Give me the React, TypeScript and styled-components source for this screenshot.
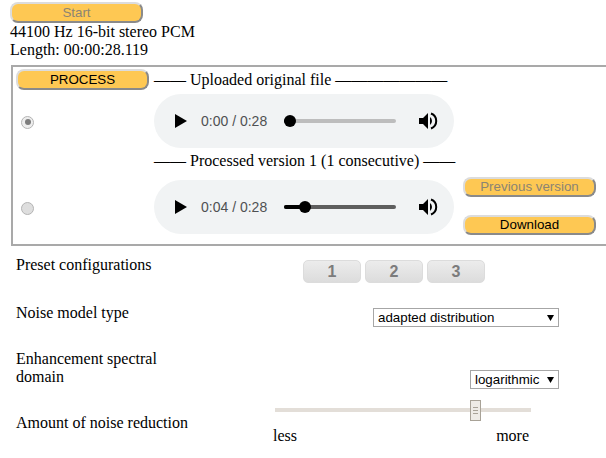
import React from 'react'
import styled, { createGlobalStyle } from 'styled-components'

const GlobalStyle = createGlobalStyle`
  html, body {
    margin: 0;
    padding: 0;
    background: #fff;
    overflow: hidden;
  }
  body {
    font-family: "Liberation Serif", "Times New Roman", serif;
    font-size: 16px;
    color: #000;
  }
`

const Page = styled.div`
  width: 606px;
  height: 458px;
  padding-top: 2px;
  box-sizing: border-box;
  overflow: hidden;
`

const Header = styled.div`
  padding-left: 10px;
`

const Button = styled.button<{ $disabled?: boolean }>`
  display: block;
  width: 133px;
  height: 21px;
  padding: 0;
  box-sizing: border-box;
  border: 2px solid;
  border-color: #dcdcdc #8a8a8a #8a8a8a #dcdcdc;
  border-radius: 8px;
  background: #fec853;
  font-family: "Liberation Sans", Arial, sans-serif;
  font-size: 13.33px;
  line-height: 16px;
  color: ${p => (p.$disabled ? '#8b8474' : '#000')};
`

const Info = styled.div`
  line-height: 18px;
`

const Panel = styled.div`
  display: grid;
  grid-template-columns: 138px 300px 1fr;
  grid-template-rows: 21px 58px 28px 58px;
  margin: 6px 0 0 11px;
  width: 620px;
  height: 181px;
  box-sizing: border-box;
  border: 2px solid #a9a9a9;
  padding: 2px 0 0 3px;
`

const Title = styled.div`
  line-height: 21px;
  white-space: nowrap;
`

const ProcessedTitle = styled(Title)`
  grid-column: 2;
  margin-top: 2px;
  line-height: 22px;
`

const RadioCell = styled.div`
  display: flex;
  align-items: center;
  padding: 6px 0 0 5px;
`

const Radio = styled.span<{ $checked?: boolean }>`
  position: relative;
  display: block;
  width: 13px;
  height: 13px;
  box-sizing: border-box;
  border: 1px solid #b4b4b4;
  border-radius: 50%;
  background: ${p => (p.$checked ? '#eeeeee' : '#dedede')};

  &::after {
    content: '';
    display: ${p => (p.$checked ? 'block' : 'none')};
    position: absolute;
    left: 2.5px;
    top: 2.5px;
    width: 6px;
    height: 6px;
    border-radius: 50%;
    background: #7d7d7d;
  }
`

const Player = styled.div`
  display: flex;
  align-items: center;
  width: 300px;
  height: 54px;
  margin-top: 4px;
  border-radius: 27px;
  background: #f1f3f4;
  font-family: "Liberation Sans", Arial, sans-serif;
  font-size: 14px;
  color: #4f5052;
`

const PlayIcon = styled.svg`
  width: 12px;
  height: 14px;
  margin-left: 21px;
  fill: #000;
`

const Time = styled.span`
  width: 83px;
  margin-left: 14px;
  white-space: nowrap;
`

const Track = styled.div<{ $elapsed: boolean }>`
  position: relative;
  width: 112px;
  height: 4px;
  border-radius: 2px;
  background: ${p => (p.$elapsed ? '#5e5e5e' : '#bdbdbd')};
`

const Fill = styled.div`
  height: 4px;
  border-radius: 2px;
  background: #000;
`

const Knob = styled.span`
  position: absolute;
  top: -4px;
  width: 12px;
  height: 12px;
  margin-left: -6px;
  border-radius: 50%;
  background: #000;
`

const VolumeIcon = styled.svg`
  width: 20px;
  height: 20px;
  margin-left: 22px;
`

const SideButtons = styled.div`
  display: flex;
  flex-direction: column;
  gap: 18px;
  padding-left: 9px;
  margin-top: 1px;
`

const Settings = styled.div`
  padding-left: 16px;
`

const Row = styled.div<{ $height: number }>`
  display: grid;
  grid-template-columns: 259px 331px;
  height: ${p => p.$height}px;
`

const Label = styled.div`
  line-height: 18px;
  white-space: nowrap;
`

const PresetRow = styled(Row)`
  padding-top: 10px;
  box-sizing: border-box;
`

const Presets = styled.div`
  display: flex;
  gap: 4px;
  margin: 4px 0 0 28px;
`

const Preset = styled.button`
  width: 58px;
  height: 23px;
  padding: 0;
  box-sizing: border-box;
  border: 1px solid #dcdcdc;
  border-radius: 5px;
  background: linear-gradient(#ececec, #dcdcdc);
  font-family: "Liberation Sans", Arial, sans-serif;
  font-size: 16px;
  font-weight: 700;
  color: #7c7c7c;
`

const SelectCell = styled.div<{ $top: number }>`
  display: flex;
  justify-content: flex-end;
  align-items: flex-start;
  padding: ${p => p.$top}px 47px 0 0;
`

const SelectBox = styled.div<{ $width: number }>`
  display: flex;
  align-items: center;
  justify-content: space-between;
  width: ${p => p.$width}px;
  height: 19px;
  box-sizing: border-box;
  padding: 0 4px;
  border: 1px solid #a6a6a6;
  background: #fff;
  font-family: "Liberation Sans", Arial, sans-serif;
  font-size: 13.33px;
  white-space: nowrap;
`

const Arrow = styled.svg`
  width: 7px;
  height: 6px;
  fill: #000;
`

const SliderCell = styled.div`
  width: 256px;
  margin-top: -6px;
`

const SliderTrack = styled.div`
  position: relative;
  height: 4px;
  background: #e3ded8;
`

const Thumb = styled.span`
  position: absolute;
  left: 195px;
  top: -8px;
  display: flex;
  flex-direction: column;
  gap: 2px;
  justify-content: center;
  align-items: center;
  width: 11px;
  height: 21px;
  box-sizing: border-box;
  border: 1px solid #a8a297;
  background: #eeebe6;

  i {
    display: block;
    width: 5px;
    height: 1px;
    background: #a8a297;
  }
`

const Scale = styled.div`
  display: flex;
  justify-content: space-between;
  margin: 15px 2px 0 -2px;
  line-height: 18px;
`

const Audio = ({ time, position }: { time: string; position: number }) => (
  <Player>
    <PlayIcon viewBox="0 0 12 14">
      <path d="M0 0 L12 7 L0 14 Z" />
    </PlayIcon>
    <Time>{time} / 0:28</Time>
    <Track $elapsed={position > 6}>
      <Fill style={{ width: position }} />
      <Knob style={{ left: position }} />
    </Track>
    <VolumeIcon viewBox="0 0 20 20">
      <path d="M1 7 H5 L10 2 V18 L5 13 H1 Z" fill="#000" />
      <path d="M12 6 A5 5 0 0 1 12 14 Z" fill="#000" />
      <path d="M13 2.5 A8 8 0 0 1 13 17.5" fill="none" stroke="#000" strokeWidth="2" />
    </VolumeIcon>
  </Player>
)

const Select = ({ width, children }: { width: number; children: string }) => (
  <SelectBox $width={width}>
    {children}
    <Arrow viewBox="0 0 7 6">
      <path d="M0 0 H7 L3.5 6 Z" />
    </Arrow>
  </SelectBox>
)

const App = () => (
  <Page>
    <GlobalStyle />
    <Header>
      <Button $disabled>Start</Button>
      <Info>
        44100 Hz 16-bit stereo PCM
        <br />
        Length: 00:00:28.119
      </Info>
    </Header>

    <Panel>
      <Button>PROCESS</Button>
      <Title>—— Uploaded original file ———————</Title>
      <div />

      <RadioCell>
        <Radio $checked />
      </RadioCell>
      <Audio time="0:00" position={6} />
      <div />

      <ProcessedTitle>—— Processed version 1 (1 consecutive) ——</ProcessedTitle>
      <div />

      <RadioCell>
        <Radio />
      </RadioCell>
      <Audio time="0:04" position={21} />
      <SideButtons>
        <Button $disabled>Previous version</Button>
        <Button>Download</Button>
      </SideButtons>
    </Panel>

    <Settings>
      <PresetRow $height={58}>
        <Label>Preset configurations</Label>
        <Presets>
          <Preset>1</Preset>
          <Preset>2</Preset>
          <Preset>3</Preset>
        </Presets>
      </PresetRow>

      <Row $height={46}>
        <Label>Noise model type</Label>
        <SelectCell $top={4}>
          <Select width={186}>adapted distribution</Select>
        </SelectCell>
      </Row>

      <Row $height={64}>
        <Label>
          Enhancement spectral
          <br />
          domain
        </Label>
        <SelectCell $top={20}>
          <Select width={89}>logarithmic</Select>
        </SelectCell>
      </Row>

      <Row $height={44}>
        <Label>Amount of noise reduction</Label>
        <SliderCell>
          <SliderTrack>
            <Thumb>
              <i />
              <i />
              <i />
            </Thumb>
          </SliderTrack>
          <Scale>
            <span>less</span>
            <span>more</span>
          </Scale>
        </SliderCell>
      </Row>
    </Settings>
  </Page>
)

export default App
